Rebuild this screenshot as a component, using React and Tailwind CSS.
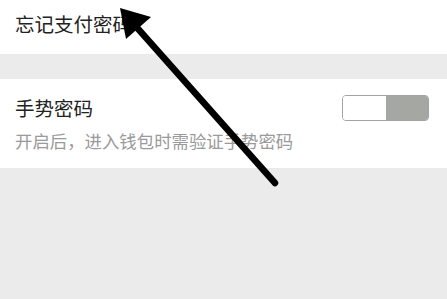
export default function App() {
  return (
    <div
      className="relative w-[447px] h-[299px] bg-[#ebebeb] overflow-hidden"
      style={{ fontFamily: '"Noto Sans CJK SC", "Noto Sans", sans-serif' }}
    >
      {/* 忘记支付密码 */}
      <div className="h-[54px] bg-white flex items-start pt-[10px] px-[15px]">
        <span className="text-[19.5px] leading-[28px] text-[#222]">忘记支付密码</span>
      </div>

      <div className="h-[25px]" />

      {/* 手势密码 */}
      <div className="h-[89px] bg-white px-[15px] pt-[16px]">
        <div className="flex items-center justify-between">
          <span className="text-[19.5px] leading-[26px] text-[#222]">手势密码</span>
          <div className="flex w-[87px] h-[26px] rounded-[4px] overflow-hidden border-[1.5px] border-[#a3a3a3] mr-[3px]">
            <div className="w-[43px] bg-white rounded-r-[3px]" />
            <div className="flex-1 bg-[#a4a7a2]" />
          </div>
        </div>
        <div className="mt-[9px] text-[17.4px] leading-[22px] text-[#9a9a9a]">
          开启后，进入钱包时需验证手势密码
        </div>
      </div>

      {/* arrow annotation */}
      <svg className="absolute inset-0" width="447" height="299" viewBox="0 0 447 299">
        <line x1="275" y1="183" x2="132" y2="22" stroke="#000" strokeWidth="6.5" strokeLinecap="round" />
        <polygon points="120,8 151,17 126,39" fill="#000" />
      </svg>
    </div>
  );
}
